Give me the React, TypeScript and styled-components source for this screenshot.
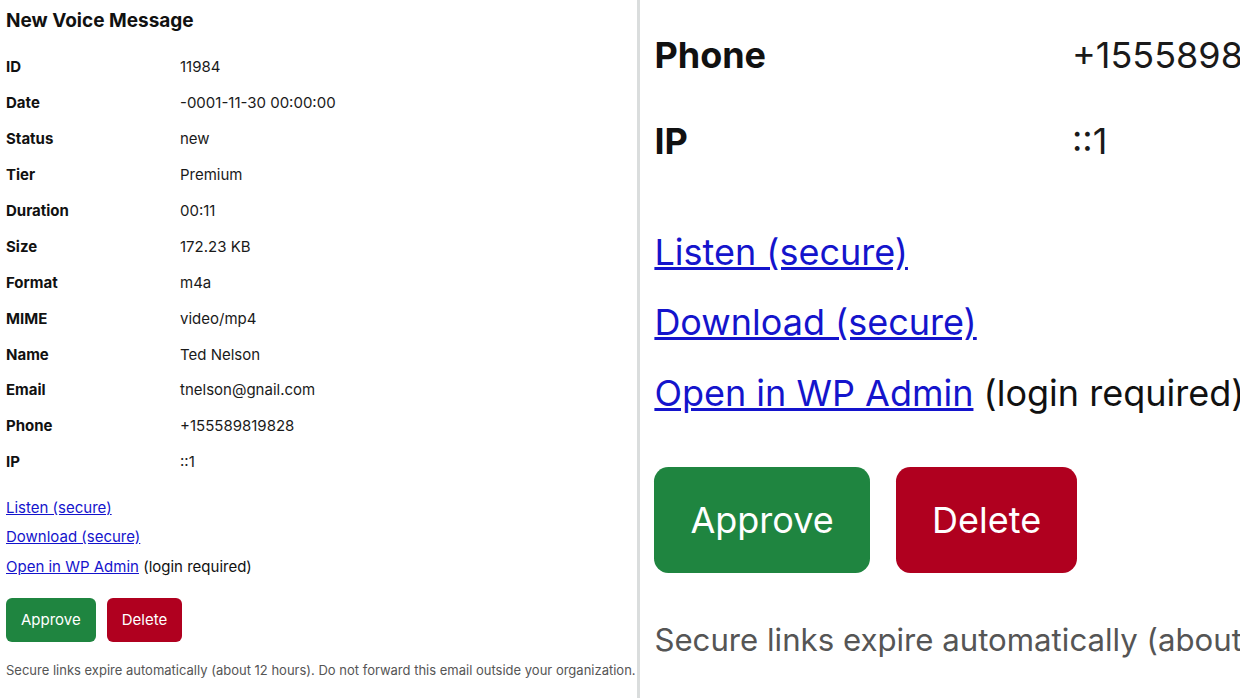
import React from 'react';
import styled, { createGlobalStyle } from 'styled-components';

const GlobalStyle = createGlobalStyle`
  html, body {
    margin: 0;
    padding: 0;
    background: #ffffff;
  }
  body {
    font-family: Inter, "Noto Sans", "Liberation Sans", sans-serif;
    color: #111;
  }
`;

const rows: [string, string][] = [
  ['ID', '11984'],
  ['Date', '-0001-11-30 00:00:00'],
  ['Status', 'new'],
  ['Tier', 'Premium'],
  ['Duration', '00:11'],
  ['Size', '172.23 KB'],
  ['Format', 'm4a'],
  ['MIME', 'video/mp4'],
  ['Name', 'Ted Nelson'],
  ['Email', 'tnelson@gnail.com'],
  ['Phone', '+155589819828'],
  ['IP', '::1'],
];

interface MessageProps {
  start?: number;
  showTitle?: boolean;
}

// the mail body, rendered once normal and once zoomed in
const Message: React.FC<MessageProps> = ({ start = 0, showTitle = true }) => (
  <Body $top={showTitle ? 9 : 5}>
    {showTitle && <Title>New Voice Message</Title>}

    <Details $gap={showTitle ? 16 : 0}>
      {rows.slice(start).map(([label, value]) => (
        <React.Fragment key={label}>
          <Label>{label}</Label>
          <Value>{value}</Value>
        </React.Fragment>
      ))}
    </Details>

    <Links>
      <LinkLine>
        <Link href="#">Listen (secure)</Link>
      </LinkLine>
      <LinkLine>
        <Link href="#">Download (secure)</Link>
      </LinkLine>
      <LinkLine>
        <Link href="#">Open in WP Admin</Link> (login required)
      </LinkLine>
    </Links>

    <Actions>
      <ActionButton $color="#1f8540">Approve</ActionButton>
      <ActionButton $color="#b0001f">Delete</ActionButton>
    </Actions>

    <Note>
      Secure links expire automatically (about 12 hours). Do not forward this email outside your organization.
    </Note>
  </Body>
);

const App: React.FC = () => (
  <>
    <GlobalStyle />
    <Screen>
      <LeftPane>
        <Message />
      </LeftPane>
      <Divider />
      <ZoomPane>
        <Zoomed>
          <Message start={10} showTitle={false} />
        </Zoomed>
      </ZoomPane>
    </Screen>
  </>
);

export default App;

const Screen = styled.div`
  display: flex;
  width: 1240px;
  height: 698px;
  overflow: hidden;
`;

const LeftPane = styled.div`
  width: 637px;
  flex-shrink: 0;
  overflow: hidden;
`;

const Divider = styled.div`
  width: 3px;
  flex-shrink: 0;
  background: #dadddd;
`;

const ZoomPane = styled.div`
  flex: 1;
  overflow: hidden;
`;

const Zoomed = styled.div`
  zoom: 2.4;
  width: 640px;
`;

const Body = styled.div<{ $top: number }>`
  padding: ${(p) => p.$top}px 0 0 6px;
  white-space: nowrap;
`;

const Title = styled.h2`
  margin: 0;
  font-size: 19px;
  line-height: 24px;
  font-weight: 700;
  color: #111;
`;

const Details = styled.div<{ $gap: number }>`
  display: grid;
  grid-template-columns: 174px 1fr;
  grid-auto-rows: 35.9px;
  align-items: center;
  margin-top: ${(p) => p.$gap}px;
  font-size: 15px;
`;

const Label = styled.div`
  font-weight: 700;
  color: #111;
`;

const Value = styled.div`
  color: #1a1a1a;
`;

const Links = styled.div`
  margin-top: 18px;
  display: flex;
  flex-direction: column;
  gap: 9.5px;
  font-size: 15px;
`;

const LinkLine = styled.div`
  line-height: 20px;
  color: #111;
`;

const Link = styled.a`
  color: #1414cc;
  text-decoration: underline;
`;

const Actions = styled.div`
  display: flex;
  gap: 11px;
  margin-top: 21px;
`;

const ActionButton = styled.button<{ $color: string }>`
  height: 44px;
  padding: 0 15px;
  border: none;
  border-radius: 6px;
  background: ${(p) => p.$color};
  color: #fff;
  font-family: Inter, "Noto Sans", "Liberation Sans", sans-serif;
  font-size: 15px;
  cursor: pointer;
`;

const Note = styled.p`
  margin: 20px 0 0;
  font-size: 13px;
  line-height: 16px;
  color: #555;
`;
